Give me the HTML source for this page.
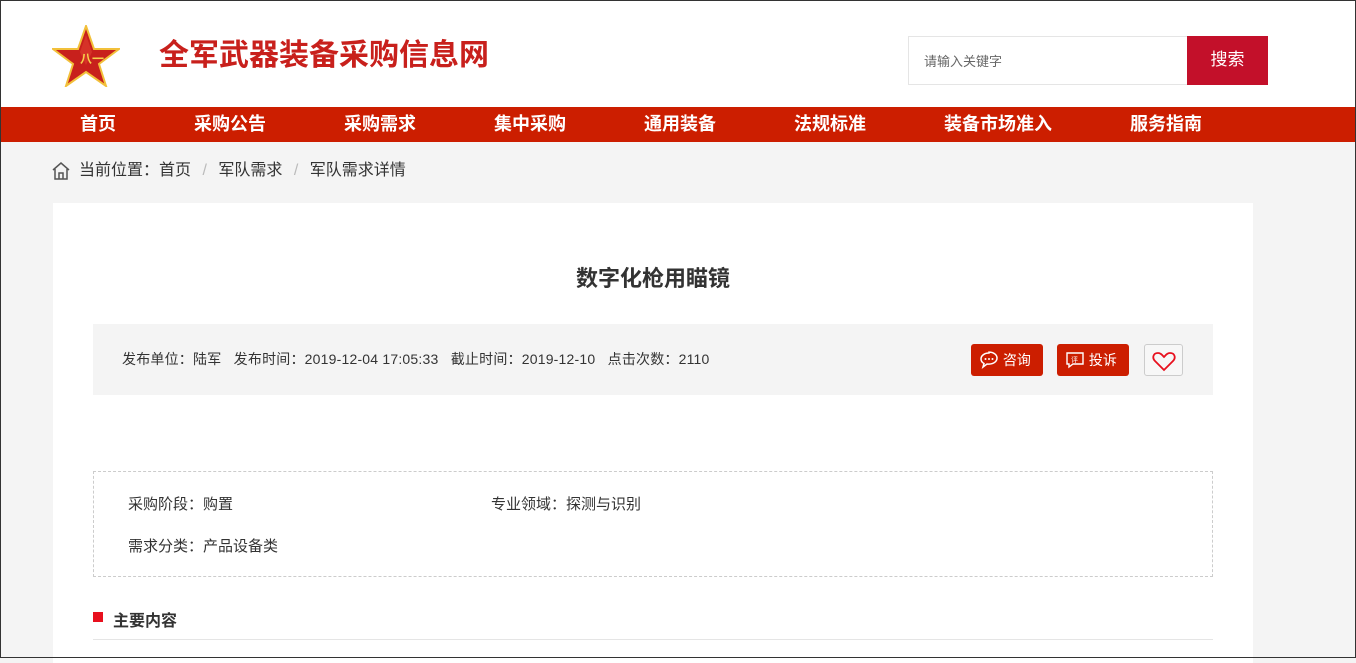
<!DOCTYPE html>
<html><head><meta charset="utf-8"><style>
*{margin:0;padding:0;box-sizing:border-box}
body{width:1356px;height:658px;overflow:hidden;background:#f4f4f4;font-family:"Liberation Sans","Noto Sans CJK SC",sans-serif;position:relative}
.a{position:absolute}
.hdr{left:0;top:0;width:1356px;height:107px;background:#fff}
.nav{left:0;top:107px;width:1356px;height:35px;background:#cc1e00}
.nav span{position:absolute;top:6px;color:#fff;font-weight:bold;font-size:18px;line-height:22px}
.btn{height:32px;background:#cc1e00;border-radius:3px;color:#fff;font-size:14px;line-height:32px}
</style></head><body>
<div class="a hdr"></div>
<svg class="a" style="left:52px;top:25px" width="68" height="62" viewBox="0 0 68 62"><polygon points="34,1 42,24 67,24 47,39 54,61 34,47 14,61 21,39 1,24 26,24" fill="#c8201c" stroke="#f2c03a" stroke-width="2"/><polygon points="34,10 40,27 34,40 28,27" fill="#e04030" opacity=".6"/><text x="28" y="38" font-size="12" fill="#f6d04a" font-weight="bold">八一</text></svg>
<div class="a" style="left:159px;top:37px;font-size:30px;font-weight:bold;color:#c8201c;line-height:38px">全军武器装备采购信息网</div>
<div class="a" style="left:908px;top:36px;width:281px;height:49px;border:1px solid #e5e5e5;background:#fff;font-size:13px;color:#666;padding:14px 0 0 15px">请输入关键字</div>
<div class="a" style="left:1187px;top:36px;width:81px;height:49px;background:#c3102a;color:#fff;font-size:17px;text-align:center;line-height:48px">搜索</div>
<div class="a nav">
<span style="left:80px">首页</span><span style="left:194px">采购公告</span><span style="left:344px">采购需求</span><span style="left:494px">集中采购</span><span style="left:644px">通用装备</span><span style="left:794px">法规标准</span><span style="left:944px">装备市场准入</span><span style="left:1130px">服务指南</span>
</div>
<svg class="a" style="left:51px;top:161px" width="20" height="19" viewBox="0 0 20 19"><path d="M2 9 L10 2 L18 9 M4 8 V18 H16 V8 M8 18 V12 H12 V18" fill="none" stroke="#555" stroke-width="1.5"/></svg>
<div class="a" style="left:79px;top:161px;font-size:16px;color:#333;line-height:20px">当前位置：首页 <span style="color:#bbb;margin:0 7px">/</span> 军队需求 <span style="color:#bbb;margin:0 7px">/</span> 军队需求详情</div>
<div class="a" style="left:53px;top:203px;width:1200px;height:460px;background:#fff"></div>
<div class="a" style="left:0;top:264px;width:1306px;text-align:center;font-size:22px;font-weight:bold;color:#333;line-height:30px">数字化枪用瞄镜</div>
<div class="a" style="left:93px;top:324px;width:1120px;height:71px;background:#f4f4f4"></div>
<div class="a" style="left:122px;top:349px;font-size:14px;color:#333;line-height:20px;letter-spacing:0.2px">发布单位：陆军&nbsp;&nbsp;&nbsp;发布时间：2019-12-04 17:05:33&nbsp;&nbsp;&nbsp;截止时间：2019-12-10&nbsp;&nbsp;&nbsp;点击次数：2110</div>
<div class="a btn" style="left:971px;top:344px;width:72px;padding-left:8px"><svg width="20" height="18" viewBox="0 0 20 18" style="vertical-align:-4px"><path d="M10 2C5 2 2 5 2 8c0 2 1 3.5 3 4.5L4 16l4-3c.7.1 1.3.1 2 .1 5 0 8-3 8-6s-3-6-8-6z" fill="none" stroke="#fff" stroke-width="1.5"/><circle cx="6.5" cy="8" r="1" fill="#fff"/><circle cx="10" cy="8" r="1" fill="#fff"/><circle cx="13.5" cy="8" r="1" fill="#fff"/></svg> 咨询</div>
<div class="a btn" style="left:1057px;top:344px;width:72px;padding-left:8px"><svg width="20" height="18" viewBox="0 0 20 18" style="vertical-align:-4px"><path d="M2 2H18V13H8L4 16V13H2Z" fill="none" stroke="#fff" stroke-width="1.4"/><text x="6" y="11" font-size="7" fill="#fff">评</text></svg> 投诉</div>
<div class="a" style="left:1144px;top:344px;width:39px;height:32px;border:1px solid #ccc;border-radius:3px;background:#f7f7f7"><svg width="24" height="22" viewBox="0 0 24 22" style="position:absolute;left:7px;top:5px"><path d="M12 20L3 11C0 8 1 3 6 3c3 0 4 2 6 4 2-2 3-4 6-4 5 0 6 5 3 8z" fill="none" stroke="#e8101e" stroke-width="1.8"/></svg></div>
<div class="a" style="left:93px;top:471px;width:1120px;height:106px;border:1px dashed #ccc"></div>
<div class="a" style="left:128px;top:493px;font-size:15px;color:#333">采购阶段：购置</div>
<div class="a" style="left:491px;top:493px;font-size:15px;color:#333">专业领域：探测与识别</div>
<div class="a" style="left:128px;top:535px;font-size:15px;color:#333">需求分类：产品设备类</div>
<div class="a" style="left:93px;top:612px;width:10px;height:10px;background:#e8101e"></div>
<div class="a" style="left:113px;top:607px;font-size:16px;font-weight:bold;color:#333">主要内容</div>
<div class="a" style="left:93px;top:639px;width:1120px;height:1px;background:#e5e5e5"></div>
<div class="a" style="left:0;top:0;width:1356px;height:658px;border:1px solid #333"></div>
</body></html>
